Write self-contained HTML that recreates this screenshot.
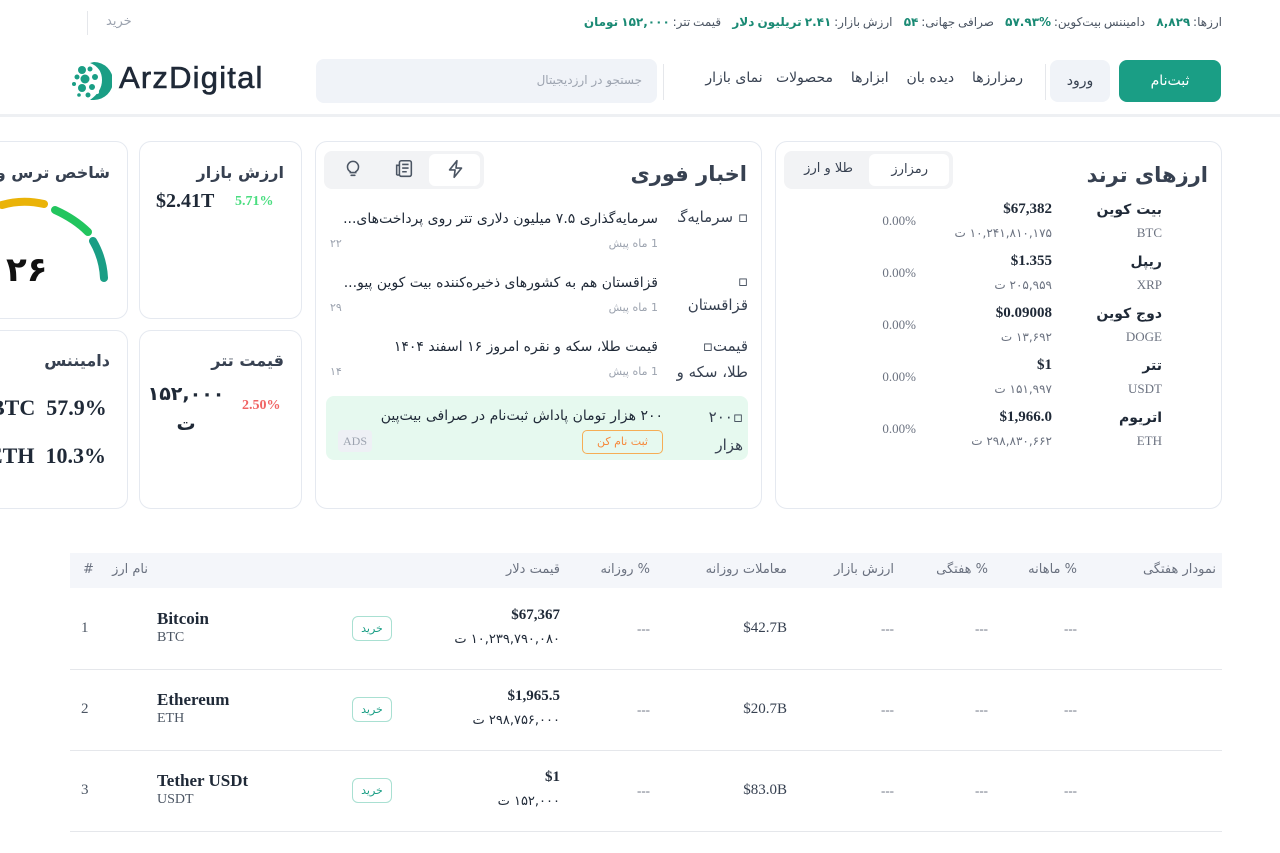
<!DOCTYPE html>
<html lang="fa"><head><meta charset="utf-8">
<style>
*{margin:0;padding:0;box-sizing:border-box}
body{width:1280px;height:853px;overflow:hidden;background:#fff;position:relative;font-family:"DejaVu Sans","Liberation Sans",sans-serif;color:#1f2937}
.a{position:absolute;white-space:nowrap}
.r{position:absolute;white-space:nowrap;direction:rtl}
.s{font-family:"Liberation Serif","DejaVu Sans",serif}
.card{position:absolute;border:1px solid #e5e9f0;border-radius:12px;background:#fff}
.g{color:#1a8a74;font-weight:bold}
.hd{color:#6b7280;font-size:13px}
.buy{position:absolute;width:40px;height:25px;border:1px solid #a9e0d2;border-radius:6px;color:#1a9e85;font-size:11px;text-align:center;line-height:23px}
</style></head><body>

<!-- top strip -->
<div class="r" style="right:58px;top:15px;font-size:12px;color:#4b5563;word-spacing:-1px">ارزها: <span class="g">۸,۸۲۹</span> &nbsp;&nbsp; دامیننس بیت‌کوین: <span class="g">%۵۷.۹۳</span> &nbsp;&nbsp; صرافی جهانی: <span class="g">۵۴</span> &nbsp;&nbsp; ارزش بازار: <span class="g">۲.۴۱ تریلیون دلار</span> &nbsp;&nbsp; قیمت تتر: <span class="g">۱۵۲,۰۰۰ تومان</span></div>
<div class="a" style="left:87px;top:11px;width:1px;height:24px;background:#e5e7eb"></div>
<div class="r" style="left:106px;top:14px;font-size:13px;color:#9ca3af">خرید</div>

<!-- nav -->
<div class="a" style="left:0;top:114px;width:1280px;height:3px;background:#eef0f3"></div>
<svg class="a" style="left:70px;top:60px" width="42" height="42" viewBox="0 0 42 42">
<path d="M24 2 A19 19 0 0 1 24 40 L20 40 C28 34 32 28 32 20 C32 12 28 6 20 3Z" fill="#1a9e85"/>
<circle cx="12" cy="10" r="4" fill="#1a9e85"/><circle cx="20" cy="9" r="2.5" fill="#1a9e85"/>
<circle cx="7" cy="17" r="2.5" fill="#1a9e85"/><circle cx="15" cy="19" r="4.5" fill="#1a9e85"/>
<circle cx="25" cy="17" r="3" fill="#1a9e85"/><circle cx="4" cy="24" r="2" fill="#1a9e85"/>
<circle cx="12" cy="28" r="4" fill="#1a9e85"/><circle cx="22" cy="27" r="3" fill="#1a9e85"/>
<circle cx="18" cy="35" r="2.5" fill="#1a9e85"/><circle cx="9" cy="35" r="1.8" fill="#1a9e85"/>
<circle cx="27" cy="32" r="2" fill="#fff"/><circle cx="28" cy="12" r="2" fill="#fff"/>
</svg>
<div class="a" style="left:119px;top:60px;font-size:31px;color:#1f2937;font-family:'Liberation Sans',sans-serif;letter-spacing:1.2px;-webkit-text-stroke:0.6px #1f2937">ArzDigital</div>
<div class="a" style="left:316px;top:59px;width:341px;height:44px;background:#f0f3f8;border-radius:8px"></div>
<div class="r" style="right:638px;top:73px;font-size:12px;color:#9ca3af">جستجو در ارزدیجیتال</div>
<div class="a" style="left:663px;top:64px;width:1px;height:36px;background:#e5e7eb"></div>
<div class="r" style="right:257px;top:70px;font-size:14px;color:#374151;word-spacing:0px">رمزارزها &nbsp;&nbsp; دیده بان &nbsp;&nbsp; ابزارها &nbsp;&nbsp; محصولات &nbsp; نمای بازار</div>
<div class="a" style="left:1045px;top:64px;width:1px;height:36px;background:#e5e7eb"></div>
<div class="a" style="left:1050px;top:60px;width:60px;height:42px;background:#f0f3f8;border-radius:8px;text-align:center;line-height:42px;font-size:14px;color:#374151">ورود</div>
<div class="a" style="left:1119px;top:60px;width:102px;height:42px;background:#1a9e85;border-radius:8px;text-align:center;line-height:42px;font-size:14px;color:#fff">ثبت‌نام</div>

<!-- trending card -->
<div class="card" style="left:775px;top:141px;width:447px;height:368px"></div>
<div class="a" style="left:784px;top:151px;width:169px;height:38px;background:#f2f3f5;border-radius:8px"></div>
<div class="a" style="left:869px;top:154px;width:80px;height:32px;background:#fff;border-radius:6px"></div>
<div class="r" style="right:352px;top:162px;font-size:13px;color:#374151">رمزارز</div>
<div class="r" style="right:427px;top:161px;font-size:13px;color:#374151">طلا و ارز</div>
<div class="r" style="right:72px;top:163px;font-size:21px;font-weight:bold;color:#374151">ارزهای ترند</div>

<div class="r" style="right:118px;top:202px;font-size:14px;font-weight:bold">بیت کوین</div>
<div class="r s" style="right:118px;top:225px;font-size:13px;color:#6b7280">BTC</div>
<div class="a s" style="right:228px;top:201px;font-size:15px;font-weight:bold">$67,382</div>
<div class="r" style="right:228px;top:226px;font-size:12px;color:#6b7280">۱۰,۲۴۱,۸۱۰,۱۷۵ ت</div>
<div class="a s" style="right:364px;top:213px;font-size:13px;color:#6b7280">0.00%</div>

<div class="r" style="right:118px;top:254px;font-size:14px;font-weight:bold">ریپل</div>
<div class="r s" style="right:118px;top:277px;font-size:13px;color:#6b7280">XRP</div>
<div class="a s" style="right:228px;top:253px;font-size:15px;font-weight:bold">$1.355</div>
<div class="r" style="right:228px;top:278px;font-size:12px;color:#6b7280">۲۰۵,۹۵۹ ت</div>
<div class="a s" style="right:364px;top:265px;font-size:13px;color:#6b7280">0.00%</div>

<div class="r" style="right:118px;top:306px;font-size:14px;font-weight:bold">دوج کوین</div>
<div class="r s" style="right:118px;top:329px;font-size:13px;color:#6b7280">DOGE</div>
<div class="a s" style="right:228px;top:305px;font-size:15px;font-weight:bold">$0.09008</div>
<div class="r" style="right:228px;top:330px;font-size:12px;color:#6b7280">۱۳,۶۹۲ ت</div>
<div class="a s" style="right:364px;top:317px;font-size:13px;color:#6b7280">0.00%</div>

<div class="r" style="right:118px;top:358px;font-size:14px;font-weight:bold">تتر</div>
<div class="r s" style="right:118px;top:381px;font-size:13px;color:#6b7280">USDT</div>
<div class="a s" style="right:228px;top:357px;font-size:15px;font-weight:bold">$1</div>
<div class="r" style="right:228px;top:382px;font-size:12px;color:#6b7280">۱۵۱,۹۹۷ ت</div>
<div class="a s" style="right:364px;top:369px;font-size:13px;color:#6b7280">0.00%</div>

<div class="r" style="right:118px;top:410px;font-size:14px;font-weight:bold">اتریوم</div>
<div class="r s" style="right:118px;top:433px;font-size:13px;color:#6b7280">ETH</div>
<div class="a s" style="right:228px;top:409px;font-size:15px;font-weight:bold">$1,966.0</div>
<div class="r" style="right:228px;top:434px;font-size:12px;color:#6b7280">۲۹۸,۸۳۰,۶۶۲ ت</div>
<div class="a s" style="right:364px;top:421px;font-size:13px;color:#6b7280">0.00%</div>

<!-- news card -->
<div class="card" style="left:315px;top:141px;width:447px;height:368px"></div>
<div class="a" style="left:324px;top:151px;width:160px;height:38px;background:#f2f3f5;border-radius:8px"></div>
<div class="a" style="left:429px;top:154px;width:51px;height:32px;background:#fff;border-radius:6px"></div>
<svg class="a" style="left:445px;top:158px" width="22" height="22" viewBox="0 0 24 24" fill="none" stroke="#4b5563" stroke-width="1.8" stroke-linejoin="round"><path d="M13 3L5 13h6l-1 8 8-10h-6z"/></svg>
<svg class="a" style="left:393px;top:158px" width="22" height="22" viewBox="0 0 24 24" fill="none" stroke="#4b5563" stroke-width="1.7"><rect x="7" y="3" width="13" height="17" rx="2"/><path d="M7 8H4v10a2 2 0 0 0 3 0M10 7h7M10 11h7M10 15h5"/></svg>
<svg class="a" style="left:342px;top:157px" width="22" height="22" viewBox="0 0 24 24" fill="none" stroke="#4b5563" stroke-width="1.7" stroke-linecap="round"><path d="M9 16a6 6 0 1 1 6 0v1H9z"/><path d="M10 20h4"/></svg>
<div class="r" style="right:533px;top:162px;font-size:21px;font-weight:bold;color:#374151">اخبار فوری</div>

<div class="r" style="right:532px;top:205px;font-size:15px;color:#374151;width:70px;height:52px;overflow:hidden;line-height:24px">▫ سرمایه‌گذاری</div>
<div class="r" style="right:622px;top:211px;font-size:14px">سرمایه‌گذاری ۷.۵ میلیون دلاری تتر روی پرداخت‌های...</div>
<div class="r" style="right:622px;top:237px;font-size:11px;color:#9ca3af">1 ماه پیش</div>
<div class="a" style="left:330px;top:237px;font-size:11px;color:#9ca3af">۲۲</div>

<div class="r" style="right:532px;top:269px;font-size:15px;color:#374151;width:70px;line-height:24px">▫<br>قزاقستان</div>
<div class="r" style="right:622px;top:275px;font-size:14px">قزاقستان هم به کشورهای ذخیره‌کننده بیت کوین پیو...</div>
<div class="r" style="right:622px;top:301px;font-size:11px;color:#9ca3af">1 ماه پیش</div>
<div class="a" style="left:330px;top:301px;font-size:11px;color:#9ca3af">۲۹</div>

<div class="r" style="right:532px;top:333px;font-size:15px;color:#374151;width:70px;line-height:26px">قیمت▫<br>طلا، سکه و</div>
<div class="r" style="right:622px;top:339px;font-size:14px">قیمت طلا، سکه و نقره امروز ۱۶ اسفند ۱۴۰۴</div>
<div class="r" style="right:622px;top:365px;font-size:11px;color:#9ca3af">1 ماه پیش</div>
<div class="a" style="left:330px;top:365px;font-size:11px;color:#9ca3af">۱۴</div>

<div class="a" style="left:326px;top:396px;width:422px;height:64px;background:#e6f9ef;border-radius:8px"></div>
<div class="r" style="right:537px;top:403px;font-size:15px;color:#374151;width:60px;line-height:28px">▫۲۰۰<br>هزار</div>
<div class="r" style="right:617px;top:408px;font-size:14px">۲۰۰ هزار تومان پاداش ثبت‌نام در صرافی بیت‌پین</div>
<div class="a" style="left:582px;top:430px;width:81px;height:24px;border:1px solid #f6ad55;border-radius:5px;color:#f6893b;font-size:11px;text-align:center;line-height:22px">ثبت نام کن</div>
<div class="a s" style="left:338px;top:430px;width:34px;height:22px;background:#eef0f5;border-radius:4px;color:#9ca3af;font-size:12px;text-align:center;line-height:22px">ADS</div>

<!-- market cap -->
<div class="card" style="left:139px;top:141px;width:163px;height:178px"></div>
<div class="r" style="right:996px;top:163px;font-size:16px;font-weight:bold;color:#374151">ارزش بازار</div>
<div class="a s" style="left:156px;top:190px;font-size:20px;font-weight:bold">$2.41T</div>
<div class="a s" style="left:235px;top:194px;font-size:14px;color:#4ade80;font-weight:bold">5.71%</div>

<div class="card" style="left:139px;top:330px;width:163px;height:179px"></div>
<div class="r" style="right:996px;top:351px;font-size:16px;font-weight:bold;color:#374151">قیمت تتر</div>
<div class="r" style="right:1054px;top:379px;font-size:19px;font-weight:bold;line-height:30px;width:80px;text-align:center">۱۵۲,۰۰۰<br>ت</div>
<div class="a s" style="left:242px;top:398px;font-size:14px;color:#f06464;font-weight:bold">2.50%</div>

<!-- fear/greed -->
<div class="card" style="left:-20px;top:141px;width:148px;height:178px"></div>
<div class="r" style="right:1170px;top:163px;font-size:16px;font-weight:bold;color:#374151;width:130px;overflow:hidden">شاخص ترس و طمع</div>
<svg class="a" style="left:0;top:190px" width="120" height="100" viewBox="0 0 120 100">
<g fill="none" stroke-width="8" stroke-linecap="round">
<path d="M2 15 Q22 9 44 14" stroke="#eab308"/>
<path d="M55 20 Q75 29 88 42" stroke="#22c55e"/>
<path d="M93 51 Q103 68 104 88" stroke="#1a9e85"/>
</g></svg>
<div class="a" style="left:6px;top:250px;font-size:34px;font-weight:bold;color:#111">۲۶</div>

<div class="card" style="left:-20px;top:330px;width:148px;height:179px"></div>
<div class="r" style="right:1170px;top:351px;font-size:16px;font-weight:bold;color:#374151">دامیننس</div>
<div class="a s" style="left:-10px;top:395px;font-size:22px;font-weight:bold;color:#1f2937">BTC&nbsp; 57.9%</div>
<div class="a s" style="left:-12px;top:443px;font-size:22px;font-weight:bold;color:#1f2937">ETH&nbsp; 10.3%</div>

<!-- table -->
<div class="a" style="left:70px;top:553px;width:1152px;height:35px;background:#f4f6fa"></div>
<div class="r hd" style="right:64px;top:562px">نمودار هفتگی</div>
<div class="r hd" style="right:203px;top:562px">% ماهانه</div>
<div class="r hd" style="right:292px;top:562px">% هفتگی</div>
<div class="r hd" style="right:386px;top:562px">ارزش بازار</div>
<div class="r hd" style="right:493px;top:562px">معاملات روزانه</div>
<div class="r hd" style="right:630px;top:562px">% روزانه</div>
<div class="r hd" style="right:720px;top:562px">قیمت دلار</div>
<div class="r hd" style="right:1132px;top:562px">نام ارز</div>
<div class="a hd" style="left:83px;top:562px">#</div>

<div class="a" style="left:70px;top:669px;width:1152px;height:1px;background:#e5e7eb"></div>
<div class="a" style="left:70px;top:750px;width:1152px;height:1px;background:#e5e7eb"></div>
<div class="a" style="left:70px;top:831px;width:1152px;height:1px;background:#e5e7eb"></div>

<!-- row 1 -->
<div class="a s" style="left:81px;top:620px;font-size:15px;color:#4b5563">1</div>
<div class="a s" style="left:157px;top:609px;font-size:17px;font-weight:bold">Bitcoin</div>
<div class="a s" style="left:157px;top:630px;font-size:14px;color:#4b5563">BTC</div>
<div class="buy" style="left:352px;top:616px">خرید</div>
<div class="a s" style="right:720px;top:607px;font-size:15px;font-weight:bold">$67,367</div>
<div class="r" style="right:720px;top:632px;font-size:13px">۱۰,۲۳۹,۷۹۰,۰۸۰ ت</div>
<div class="a s" style="right:630px;top:621px;font-size:13px;color:#6b7280">---</div>
<div class="a s" style="right:493px;top:620px;font-size:15px;color:#374151">$42.7B</div>
<div class="a s" style="right:386px;top:621px;font-size:13px;color:#6b7280">---</div>
<div class="a s" style="right:292px;top:621px;font-size:13px;color:#6b7280">---</div>
<div class="a s" style="right:203px;top:621px;font-size:13px;color:#6b7280">---</div>

<!-- row 2 -->
<div class="a s" style="left:81px;top:701px;font-size:15px;color:#4b5563">2</div>
<div class="a s" style="left:157px;top:690px;font-size:17px;font-weight:bold">Ethereum</div>
<div class="a s" style="left:157px;top:711px;font-size:14px;color:#4b5563">ETH</div>
<div class="buy" style="left:352px;top:697px">خرید</div>
<div class="a s" style="right:720px;top:688px;font-size:15px;font-weight:bold">$1,965.5</div>
<div class="r" style="right:720px;top:713px;font-size:13px">۲۹۸,۷۵۶,۰۰۰ ت</div>
<div class="a s" style="right:630px;top:702px;font-size:13px;color:#6b7280">---</div>
<div class="a s" style="right:493px;top:701px;font-size:15px;color:#374151">$20.7B</div>
<div class="a s" style="right:386px;top:702px;font-size:13px;color:#6b7280">---</div>
<div class="a s" style="right:292px;top:702px;font-size:13px;color:#6b7280">---</div>
<div class="a s" style="right:203px;top:702px;font-size:13px;color:#6b7280">---</div>

<!-- row 3 -->
<div class="a s" style="left:81px;top:782px;font-size:15px;color:#4b5563">3</div>
<div class="a s" style="left:157px;top:771px;font-size:17px;font-weight:bold">Tether USDt</div>
<div class="a s" style="left:157px;top:792px;font-size:14px;color:#4b5563">USDT</div>
<div class="buy" style="left:352px;top:778px">خرید</div>
<div class="a s" style="right:720px;top:769px;font-size:15px;font-weight:bold">$1</div>
<div class="r" style="right:720px;top:794px;font-size:13px">۱۵۲,۰۰۰ ت</div>
<div class="a s" style="right:630px;top:783px;font-size:13px;color:#6b7280">---</div>
<div class="a s" style="right:493px;top:782px;font-size:15px;color:#374151">$83.0B</div>
<div class="a s" style="right:386px;top:783px;font-size:13px;color:#6b7280">---</div>
<div class="a s" style="right:292px;top:783px;font-size:13px;color:#6b7280">---</div>
<div class="a s" style="right:203px;top:783px;font-size:13px;color:#6b7280">---</div>

</body></html>
